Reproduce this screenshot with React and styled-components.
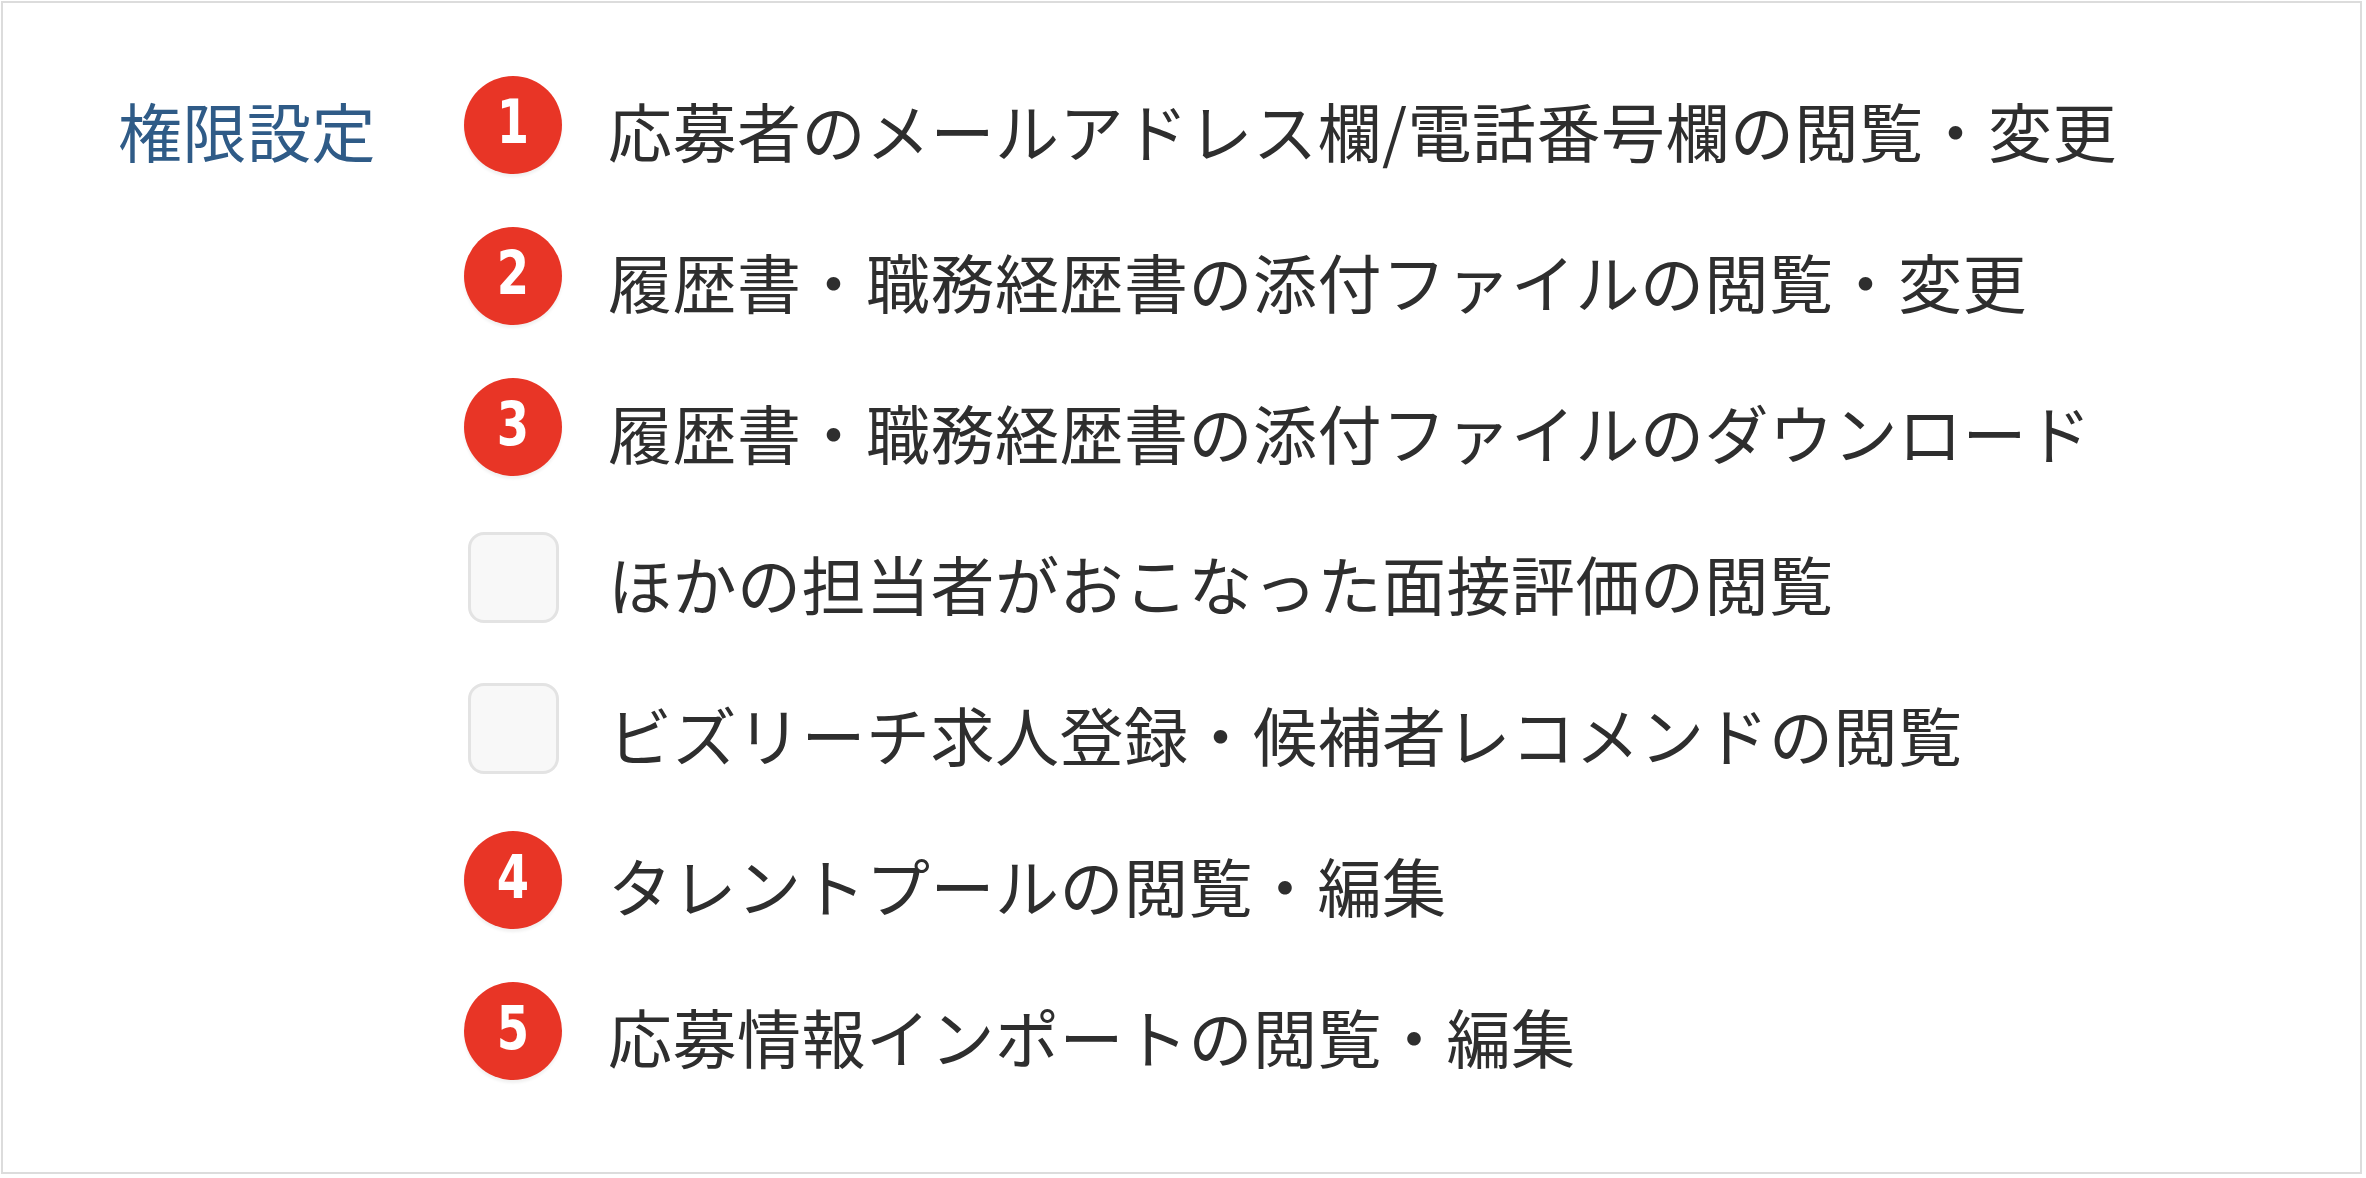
import React from 'react'
import styled, { createGlobalStyle } from 'styled-components'

const GlobalStyle = createGlobalStyle`
  html, body {
    margin: 0;
    padding: 0;
    background: #ffffff;
  }
  body {
    font-family: "Noto Sans CJK JP", "Noto Sans", sans-serif;
  }
`

const Frame = styled.div`
  box-sizing: border-box;
  width: 2361px;
  height: 1173px;
  margin: 1px 0 0 1px;
  border: 2px solid #dcdcdc;
  background: #ffffff;
  display: grid;
  grid-template-columns: 346px 1fr;
  padding: 46px 0 0 115px;
`

const Label = styled.div`
  height: 151px;
  display: flex;
  align-items: center;
  font-size: 64px;
  letter-spacing: 0.5px;
  color: #2f5b87;
  padding-top: 8px;
  box-sizing: border-box;
`

const List = styled.ul`
  list-style: none;
  margin: 0;
  padding: 0;
  display: flex;
  flex-direction: column;
`

const Row = styled.li`
  height: 151px;
  display: flex;
  align-items: center;
  gap: 46px;
`

const Marker = styled.div`
  width: 98px;
  height: 98px;
  flex: none;
  display: flex;
  align-items: center;
  justify-content: center;
`

const Badge = styled.span`
  width: 98px;
  height: 98px;
  border-radius: 50%;
  background: #e83526;
  box-shadow: 0 3px 3px rgba(0, 0, 0, 0.06);
  color: #ffffff;
  display: flex;
  align-items: center;
  justify-content: center;
  font-family: "DejaVu Sans Condensed", "DejaVu Sans", sans-serif;
  font-weight: 700;
  font-size: 60px;
  line-height: 1;
`

const Digit = styled.span`
  display: inline-block;
  transform: translateY(-3px) scaleX(0.86);
`

const Checkbox = styled.span`
  box-sizing: border-box;
  width: 91px;
  height: 91px;
  border: 3px solid #e3e3e3;
  border-radius: 16px;
  background: #f8f8f8;
`

const ItemText = styled.span`
  font-size: 64px;
  letter-spacing: 0.5px;
  color: #2e2e2e;
  white-space: nowrap;
  padding-top: 8px;
`

const permissions = [
  { no: 1, text: '応募者のメールアドレス欄/電話番号欄の閲覧・変更' },
  { no: 2, text: '履歴書・職務経歴書の添付ファイルの閲覧・変更' },
  { no: 3, text: '履歴書・職務経歴書の添付ファイルのダウンロード' },
  { no: null, text: 'ほかの担当者がおこなった面接評価の閲覧' },
  { no: null, text: 'ビズリーチ求人登録・候補者レコメンドの閲覧' },
  { no: 4, text: 'タレントプールの閲覧・編集' },
  { no: 5, text: '応募情報インポートの閲覧・編集' },
]

const App = () => {
  return (
    <>
      <GlobalStyle />
      <Frame>
        <div>
          <Label>権限設定</Label>
        </div>
        <List>
          {permissions.map((item) => (
            <Row key={item.text}>
              <Marker>
                {item.no ? (
                  <Badge>
                    <Digit>{item.no}</Digit>
                  </Badge>
                ) : (
                  <Checkbox />
                )}
              </Marker>
              <ItemText>{item.text}</ItemText>
            </Row>
          ))}
        </List>
      </Frame>
    </>
  )
}

export default App
